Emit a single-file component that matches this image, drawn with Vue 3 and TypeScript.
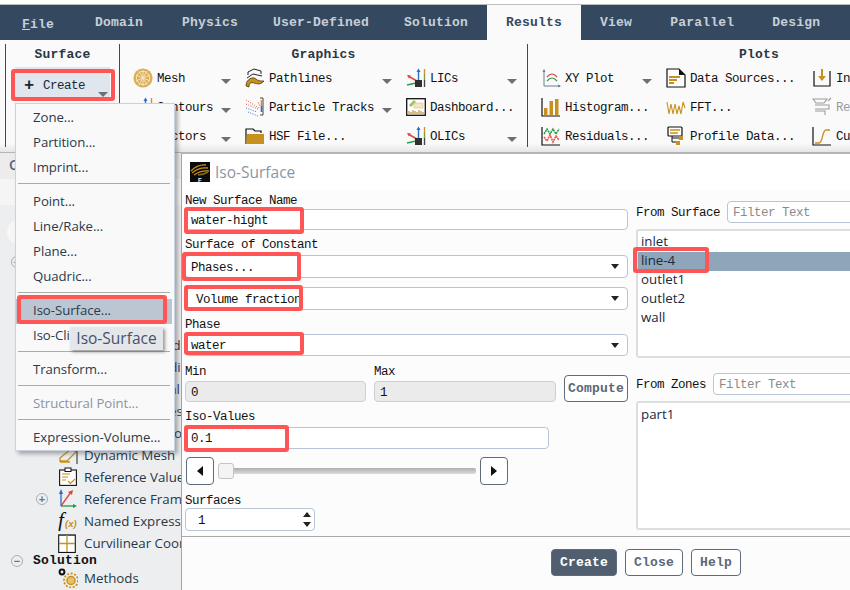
<template>
  <div class="app">
    <div class="tabs">
      <div v-for="t in tabs" :key="t.name" class="tab" :class="t.cls">
        <template v-if="t.name === 'File'"><u>F</u>ile</template>
        <template v-else>{{ t.name }}</template>
      </div>
    </div>

    <div class="ribbon">
      <section class="group group--surface">
        <h4 class="group-title">Surface</h4>
        <div class="create-btn">
          <span class="create-plus">+</span>
          <span>Create</span>
          <i class="arrow create-arrow"></i>
        </div>
      </section>

      <section class="group group--graphics">
        <h4 class="group-title">Graphics</h4>
        <div class="cmd-grid cmd-grid--graphics">
          <div v-for="c in graphics" :key="c.label" class="cmd">
            <svg class="cmd-icon" viewBox="0 0 20 20" v-html="icons[c.icon]"></svg>
            <span class="cmd-label">{{ c.label }}</span>
            <i v-if="c.drop" class="arrow"></i>
          </div>
        </div>
      </section>

      <section class="group group--plots">
        <h4 class="group-title">Plots</h4>
        <div class="cmd-grid cmd-grid--plots">
          <div v-for="c in plots" :key="c.label" class="cmd" :class="{ 'cmd--off': c.off }">
            <svg class="cmd-icon" viewBox="0 0 20 20" v-html="icons[c.icon]"></svg>
            <span class="cmd-label">{{ c.label }}</span>
            <i v-if="c.drop" class="arrow"></i>
          </div>
        </div>
      </section>
    </div>

    <div class="outline">
      <div class="outline-tab">Outline View</div>
      <div class="outline-filter"></div>
      <div class="tree">
        <div class="search-pill"></div>
        <div class="tree-head"><span class="expander">−</span><b>Setup</b></div>
        <div v-for="r in tree" :key="r.label" class="tree-row">
          <span class="tree-slot"><span v-if="r.plus" class="expander">+</span></span>
          <svg class="tree-icon" viewBox="0 0 20 20" v-html="icons[r.icon]"></svg>
          <span>{{ r.label }}</span>
        </div>
        <div class="tree-head"><span class="expander">−</span><b>Solution</b></div>
        <div class="tree-row">
          <span class="tree-slot"></span>
          <svg class="tree-icon" viewBox="0 0 20 20" v-html="icons.methods"></svg>
          <span>Methods</span>
        </div>
      </div>
    </div>

    <!-- Create dropdown -->
    <div class="menu">
      <template v-for="(m, i) in menu" :key="i">
        <div v-if="m === '-'" class="menu-sep"></div>
        <div v-else class="menu-item" :class="{ 'menu-item--on': m === 'Iso-Surface...', 'menu-item--off': m === 'Structural Point...' }">{{ m }}</div>
      </template>
    </div>
    <div class="tooltip">Iso-Surface</div>

    <!-- Iso-Surface dialog -->
    <div class="dialog">
      <div class="dialog-title">
        <svg class="dialog-icon" viewBox="0 0 20 20">
          <rect width="20" height="20" fill="#0b0b0b" />
          <path d="M1 9 Q8 2 16 3 M2 11 Q9 5 18 6 M4 13 Q11 8 19 9" fill="none" stroke="#c8911d" stroke-width="1.3" />
          <path d="M8 13 Q13 13 18 10" fill="none" stroke="#8a6414" stroke-width="1.6" />
          <text x="8" y="19.5" font-size="6" font-weight="700" fill="#fff" font-family="Liberation Sans">F</text>
        </svg>
        <span>Iso-Surface</span>
      </div>

      <div class="dialog-body">
        <div class="col-left">
          <label class="lab lab--first">New Surface Name</label>
          <div class="field field--name">water-hight</div>

          <label class="lab lab--constant">Surface of Constant</label>
          <div class="field select select--a">Phases...<i class="caret"></i></div>
          <div class="field select select--b">Volume fraction<i class="caret"></i></div>

          <label class="lab lab--phase">Phase</label>
          <div class="field select select--c">water<i class="caret"></i></div>

          <div class="minmax">
            <div class="minmax-cell">
              <label class="lab lab--minmax">Min</label>
              <div class="field field--off">0</div>
            </div>
            <div class="minmax-cell">
              <label class="lab lab--minmax">Max</label>
              <div class="field field--off">1</div>
            </div>
            <button class="btn btn--compute">Compute</button>
          </div>

          <label class="lab lab--iso">Iso-Values</label>
          <div class="field field--iso">0.1</div>

          <div class="slider-row">
            <div class="step-btn"><i class="tri tri--left"></i></div>
            <div class="slider">
              <div class="slider-knob"></div>
              <div class="slider-track"></div>
            </div>
            <div class="step-btn"><i class="tri tri--right"></i></div>
          </div>

          <label class="lab lab--surfaces">Surfaces</label>
          <div class="field field--spin">
            1
            <span class="spin"><i class="tri tri--up"></i><i class="tri tri--down"></i></span>
          </div>
        </div>

        <div class="col-right">
          <div class="filter-row filter-row--surface">
            <label class="lab">From Surface</label>
            <div class="field field--filter">Filter Text</div>
          </div>
          <div class="listbox">
            <div v-for="s in surfaces" :key="s" class="list-item" :class="{ 'list-item--on': s === 'line-4' }">{{ s }}</div>
          </div>
          <div class="filter-row filter-row--zones">
            <label class="lab">From Zones</label>
            <div class="field field--filter">Filter Text</div>
          </div>
          <div class="listbox">
            <div class="list-item list-item--zone">part1</div>
          </div>
        </div>
      </div>

      <div class="dialog-foot">
        <button class="btn btn--primary">Create</button>
        <button class="btn">Close</button>
        <button class="btn">Help</button>
      </div>
    </div>

    <!-- Red annotation boxes drawn over the screenshot -->
    <div v-for="m in marks" :key="m" class="mark" :class="`mark--${m}`"></div>
  </div>
</template>

<script setup lang="ts">
interface Cmd {
  label: string;
  icon: string;
  drop?: boolean;
  off?: boolean;
}

const tabs = [
  { name: 'File', cls: 'tab--file' },
  { name: 'Domain', cls: 'tab--domain' },
  { name: 'Physics', cls: '' },
  { name: 'User-Defined', cls: 'tab--tight' },
  { name: 'Solution', cls: 'tab--tight' },
  { name: 'Results', cls: 'tab--active' },
  { name: 'View', cls: '' },
  { name: 'Parallel', cls: '' },
  { name: 'Design', cls: '' },
];

const graphics: Cmd[] = [
  { label: 'Mesh', icon: 'mesh', drop: true },
  { label: 'Pathlines', icon: 'pathlines', drop: true },
  { label: 'LICs', icon: 'lic', drop: true },
  { label: 'Contours', icon: 'lic', drop: true },
  { label: 'Particle Tracks', icon: 'particles', drop: true },
  { label: 'Dashboard...', icon: 'dashboard' },
  { label: 'Vectors', icon: 'lic', drop: true },
  { label: 'HSF File...', icon: 'folder' },
  { label: 'OLICs', icon: 'lic', drop: true },
];

const plots: Cmd[] = [
  { label: 'XY Plot', icon: 'xy', drop: true },
  { label: 'Data Sources...', icon: 'doc' },
  { label: 'Interpolated Data...', icon: 'interp' },
  { label: 'Histogram...', icon: 'histogram' },
  { label: 'FFT...', icon: 'fft' },
  { label: 'Reporting...', icon: 'report', off: true },
  { label: 'Residuals...', icon: 'residuals' },
  { label: 'Profile Data...', icon: 'profile' },
  { label: 'Curves...', icon: 'curve' },
];

const tree = [
  { label: 'General', icon: 'refvalues' },
  { label: 'Models', icon: 'refvalues' },
  { label: 'Materials', icon: 'refvalues' },
  { label: 'Boundary Conditions', icon: 'refvalues' },
  { label: 'Cell Zone Conditions', icon: 'refvalues' },
  { label: 'Non-Conformal Grid', icon: 'refvalues' },
  { label: 'Mesh Interfaces', icon: 'refvalues' },
  { label: 'Mixing Plane Zone', icon: 'refvalues' },
  { label: 'Dynamic Mesh', icon: 'dynmesh' },
  { label: 'Reference Values', icon: 'refvalues' },
  { label: 'Reference Frames', icon: 'frames', plus: true },
  { label: 'Named Expressions', icon: 'fx' },
  { label: 'Curvilinear Coordinates', icon: 'curvi' },
];

const menu = [
  'Zone...', 'Partition...', 'Imprint...', '-',
  'Point...', 'Line/Rake...', 'Plane...', 'Quadric...', '-',
  'Iso-Surface...', 'Iso-Clip...', '-',
  'Transform...', '-',
  'Structural Point...', '-',
  'Expression-Volume...',
];

const surfaces = ['inlet', 'line-4', 'outlet1', 'outlet2', 'wall'];
const marks = ['create', 'iso', 'name', 'phases', 'volume', 'water', 'value', 'line'];

const gold = '#c8911d';
const icons: Record<string, string> = {
  mesh: `<circle cx="10" cy="10" r="9.6" fill="#dcae55"/><g fill="none" stroke="#f7e8c6" stroke-width=".9"><circle cx="10" cy="10" r="6.6"/><path d="M3 7 10 10 17 7M3 13 10 10 17 13M10 2V18M6 3 14 17M14 3 6 17"/></g>`,
  pathlines: `<g fill="none" stroke="#222" stroke-width="1"><path d="M3 7V4L9 1 16 3V6"/><path d="M2 10 8 6 17 8"/></g><path d="M1 18C1 11 8 8 11 11 13 13 16 13 19 13 16 17 12 16 9 15 6 14 4 15 4 19Z" fill="${gold}" stroke="#3a2a08" stroke-width=".7"/>`,
  lic: `<path d="M12.5 14V2" stroke="#2d6fc0" stroke-width="1.4"/><path d="M12.5 .5 10.5 4H14.5Z" fill="#2d6fc0"/><path d="M11 13 2 8" stroke="#e8453c" stroke-width="1.6"/><path d="M1 7 5 7.5 3 10.5Z" fill="#e8453c"/><path d="M10 15 1 17" stroke="#2aa14a" stroke-width="1.6"/><rect x="9" y="12" width="7" height="7" fill="#2f2f2f"/><path d="M18.5 1V6" stroke="#d8902a" stroke-width="1.4"/><path d="M18.5 6V12" stroke="#8a9a3a" stroke-width="1.4"/><path d="M18.5 12V19" stroke="#444" stroke-width="1.4"/>`,
  particles: `<g stroke-width="1" stroke-dasharray="1 1.4" fill="none"><path d="M1 3 14 11" stroke="#e2574c"/><path d="M1 7 13 12" stroke="#e2574c"/><path d="M1 11 12 15" stroke="#4a76c4"/><path d="M3 15 13 19" stroke="#4a76c4"/></g><path d="M13 5 15 9" stroke="#e2a0a0"/><path d="M15 1H18V18H15" fill="none" stroke="#444"/><path d="M16.5 3V9" stroke="#d8902a" stroke-width="1.6"/><path d="M16.5 9V15" stroke="#3a6ab4" stroke-width="1.6"/>`,
  dashboard: `<rect x=".7" y="1.7" width="18.6" height="16.6" fill="#fff" stroke="#111" stroke-width="1.3"/><path d="M3 8 8 3 10 5 5 10Z" fill="#9fc06a"/><rect x="8" y="6" width="9" height="5" fill="#f4e6c4" stroke="#d9bb7c" stroke-width=".6"/><path d="M3 17V14M5 17V15M7 17V13M9 17V14M11 17V15M13 17V13M15 17V14M17 17V15" stroke="${gold}" stroke-width="1.2"/>`,
  folder: `<path d="M1 18V3H8L10 5H16V7" fill="none" stroke="#111" stroke-width="1.2"/><path d="M1 18 2 8H19V18Z" fill="${gold}"/>`,
  xy: `<path d="M3 2V18H19" fill="none" stroke="#6a7f94" stroke-width="1"/><path d="M1.5 4 3 1 4.5 4ZM17 16.5 20 18 17 19.500Z" fill="#6a7f94"/><path d="M6 9Q11 3 16 9" fill="none" stroke="#d8443c" stroke-width="1.2"/><path d="M6 13Q11 7 16 13" fill="none" stroke="#2f9a4a" stroke-width="1.2"/>`,
  doc: `<path d="M1 1H13L19 7V19H1Z" fill="#fff" stroke="#111" stroke-width="1.2"/><path d="M13 1 19 7H13Z" fill="#111"/><path d="M3 9H14M3 12H11M3 15H8" stroke="${gold}" stroke-width="1.8"/>`,
  interp: `<path d="M2 3V18H18V3" fill="none" stroke="#111" stroke-width="1.2"/><path d="M10 1V9" stroke="${gold}" stroke-width="2"/><path d="M6 8H14L10 13Z" fill="${gold}"/>`,
  histogram: `<path d="M1 1V19H19" fill="none" stroke="#111" stroke-width="1.2"/><rect x="3" y="11" width="3.500" height="7" fill="${gold}"/><rect x="8.500" y="4" width="3.500" height="14" fill="${gold}"/><rect x="14" y="2" width="3.500" height="16" fill="${gold}"/>`,
  fft: `<path d="M1 5 3 17 5 7 7 17 9 7 11 17 13 9 15 17 17 5 19 11" fill="none" stroke="${gold}" stroke-width="1.1"/>`,
  report: `<g fill="none" stroke="#9a9a9a" stroke-width="1.1"><path d="M1 2H15L12 6H4ZM3 8H17V12H3M3 14H13V18"/><path d="M16 4 19 1"/></g>`,
  residuals: `<path d="M1 1V19H19" fill="none" stroke="#111" stroke-width="1.2"/><path d="M3 8 6 3 9 8 12 3 15 8 18 3" fill="none" stroke="#2a9c4a" stroke-width="1.6" stroke-dasharray="2 .6"/><path d="M3 11 6 15 9 9 12 16 15 10 18 14" fill="none" stroke="#e85a50" stroke-width="1.6" stroke-dasharray="2 .6"/>`,
  profile: `<rect x="2" y="1" width="14" height="9" fill="#fff" stroke="#111" stroke-width="1.2" rx="1"/><path d="M4 4H14M4 7H12" stroke="${gold}" stroke-width="1.6"/><path d="M6 10V16H12M6 12H13" fill="none" stroke="#111"/><rect x="13" y="10" width="4" height="4" fill="${gold}"/><rect x="10" y="15" width="4" height="4" fill="${gold}"/>`,
  curve: `<path d="M1 1V19H19" fill="none" stroke="#111" stroke-width="1.2"/><path d="M3 17H7C11 17 10 4 14 4H18" fill="none" stroke="${gold}" stroke-width="1.3"/>`,
  dynmesh: `<path d="M2 13 13 4 18 7 9 16H2ZM2 17H12" fill="none" stroke="${gold}" stroke-width="1.300"/><path d="M19 2V19" stroke="#222"/>`,
  refvalues: `<rect x="1.600" y="3" width="16.800" height="15.400" fill="#fff" stroke="#111" stroke-width="1.100"/><rect x="7" y="1" width="6" height="3.500" fill="#fff" stroke="#111"/><path d="M4 7H12M4 10H10M4 13H8" stroke="${gold}" stroke-width="1.200"/><path d="M10 14 12.500 16.500 17 12" fill="none" stroke="${gold}" stroke-width="1.200"/>`,
  frames: `<path d="M3 2V17" stroke="#2a6ec4" stroke-width="1.300"/><path d="M1 5 3 0 5 5Z" fill="#2a6ec4"/><path d="M3 17 13 3" stroke="#e2443c" stroke-width="1.300"/><path d="M10 3 15 1 14 6Z" fill="#e2443c"/><path d="M3 17H16" stroke="#1f9a45" stroke-width="1.300"/><path d="M15 15 19 17 15 19Z" fill="#1f9a45"/>`,
  fx: `<text x="0" y="16" font-size="21" font-style="italic" font-family="Liberation Serif" fill="#111">f</text><text x="7" y="16" font-size="9.500" font-style="italic" font-family="Liberation Sans" font-weight="700" fill="${gold}">(x)</text>`,
  curvi: `<rect x=".7" y="1.700" width="16.600" height="14.600" transform="scale(1 1.200)" fill="#fff" stroke="#111" stroke-width="1.100"/><path d="M9 2V19M1 10.500H17" stroke="${gold}" stroke-width="1.300"/>`,
  methods: `<circle cx="4" cy="4" r="2.400" fill="none" stroke="#111" stroke-width="2"/><circle cx="13" cy="12.500" r="4" fill="#e8c06a" stroke="${gold}" stroke-width="1.500"/><circle cx="13" cy="12.500" r="7" fill="none" stroke="${gold}" stroke-width="1.800" stroke-dasharray="2 1.600"/>`,
};
</script>

<style scoped>
.app {
  position: relative;
  display: flex;
  flex-direction: column;
  width: 850px;
  height: 590px;
  overflow: hidden;
  background: #fff;
  border-top: 2px solid #fff;
  box-sizing: border-box;
  font-family: "Liberation Mono", "DejaVu Sans Mono", monospace;
  font-size: 12.5px;
  letter-spacing: -0.5px;
  color: #111;
}

.tabs {
  display: flex;
  flex: none;
  height: 35px;
  margin-top: 2px;
  border-top: 1px solid #bdbdbd;
  box-sizing: content-box;
  background: #34495f;
  color: #c8cfd8;
  font-size: 13px;
  font-weight: 700;
  letter-spacing: 0.2px;
  white-space: nowrap;
}

.tab {
  display: flex;
  align-items: center;
  padding: 0 19px;
}

.tab--file {
  padding: 3px 22px 0 22px;
}

.tab--domain {
  padding-right: 20px;
}

.tab--tight {
  padding-left: 16px;
}

.tab--active {
  background: #fafafa;
  color: #34495f;
}

.ribbon {
  display: flex;
  flex: none;
  height: 113px;
  padding: 4px 0 0 5px;
  box-sizing: border-box;
  background: linear-gradient(#fafafa 92%, #e6e6e6);
  border-bottom: 1px solid #b5b5b5;
}

.group {
  flex: none;
  height: 103px;
  box-sizing: border-box;
  border-right: 1px solid #3a4a5a;
}

.group--surface {
  width: 115px;
  border-left: 1px solid #3a4a5a;
}

.group--graphics {
  width: 408px;
  padding-left: 13px;
}

.group--plots {
  flex: none;
  width: 462px;
  padding-left: 13px;
  border-right: 0;
}

.group-title {
  height: 22px;
  margin: 0;
  font-size: 13px;
  line-height: 22px;
  letter-spacing: 0.2px;
  text-align: center;
  color: #2a3644;
}

.group--graphics .group-title {
  margin-left: -13px;
}

.group--plots .group-title {
  margin-left: -13px;
}

.create-btn {
  display: flex;
  align-items: center;
  width: 95px;
  height: 31px;
  margin: 1px 0 0 9px;
  padding: 6px 0 0 9px;
  box-sizing: border-box;
  background: #dfe6ee;
  color: #1b2733;
}

.create-plus {
  width: 19px;
  font-size: 17px;
  font-weight: 700;
}

.create-arrow {
  align-self: flex-end;
  margin: 0 2px 1px auto;
}

.arrow {
  flex: none;
  width: 0;
  height: 0;
  margin-top: 7px;
  margin-left: auto;
  border-left: 5px solid transparent;
  border-right: 5px solid transparent;
  border-top: 5px solid #6c7075;
}

.cmd-grid {
  display: grid;
  grid-auto-rows: 24px;
  column-gap: 4px;
  row-gap: 5px;
}

.cmd-grid--graphics {
  grid-template-columns: 108px 157px 121px;
}

.cmd-grid--plots {
  grid-template-columns: 121px 142px 200px;
}

.cmd {
  display: flex;
  align-items: center;
  gap: 4px;
  padding-right: 10px;
  white-space: nowrap;
}

.cmd-label {
  padding-top: 2px;
}

.cmd--off {
  color: #9a9a9a;
}

.cmd-icon {
  flex: none;
  width: 20px;
  height: 20px;
}

.outline {
  display: flex;
  flex-direction: column;
  flex: 1;
  width: 181px;
  min-height: 0;
  font-family: "Open Sans", "Noto Sans", sans-serif;
  font-size: 13.3px;
  letter-spacing: 0;
  color: #24384c;
}

.outline-tab {
  flex: none;
  height: 26px;
  padding-left: 9px;
  background: #ececec;
  font-weight: 600;
  font-size: 14px;
  line-height: 24px;
  color: #55657a;
}

.outline-filter {
  flex: none;
  height: 26px;
  background: #f5f5f5;
}

.tree {
  flex: 1;
  padding-top: 14px;
  background: #edeef0;
  white-space: nowrap;
}

.search-pill {
  width: 120px;
  height: 26px;
  margin-left: 7px;
  border-radius: 13px;
  background: #f6f6f7;
}

.tree-head {
  display: flex;
  align-items: center;
  gap: 10px;
  height: 13px;
  margin-top: 10px;
  padding-left: 11px;
  font-family: "Liberation Mono", monospace;
  font-size: 13px;
  letter-spacing: 0.2px;
  color: #111;
}

.tree-row + .tree-head {
  margin-top: 0;
}

.tree-row {
  display: flex;
  align-items: center;
  height: 22px;
  padding-left: 36px;
}

.tree-slot {
  flex: none;
  display: flex;
  width: 22px;
}

.tree-icon {
  flex: none;
  width: 20px;
  height: 20px;
  margin-right: 6px;
}

.expander {
  display: flex;
  align-items: center;
  justify-content: center;
  flex: none;
  width: 12px;
  height: 12px;
  border: 1.5px solid #a9b0b8;
  border-radius: 50%;
  box-sizing: border-box;
  font-family: "Liberation Sans", sans-serif;
  font-size: 11px;
  font-weight: 700;
  color: #6d7680;
}

.menu {
  position: absolute;
  left: 15px;
  top: 101px;
  width: 160px;
  height: 348px;
  padding-top: 1.5px;
  box-sizing: border-box;
  background: #f9f9f9;
  border: 1px solid #c8d2e0;
  box-shadow: 3px 3px 4px rgba(60, 60, 60, 0.4);
  font-family: "Open Sans", "Noto Sans", sans-serif;
  font-size: 13.2px;
  letter-spacing: -0.05px;
  color: #2b3a4a;
  z-index: 2;
}

.menu-item {
  height: 25px;
  margin-right: 2px;
  padding-left: 17px;
  line-height: 22px;
}

.menu-item--on {
  background: #bcc6d2;
}

.menu-item--off {
  color: #8b949e;
}

.menu-sep {
  height: 1px;
  margin: 2px 4px 6px 2px;
  background: #ababab;
}

.tooltip {
  position: absolute;
  left: 70px;
  top: 325px;
  width: 93px;
  height: 23px;
  background: #e4e6e9;
  box-shadow: 2px 2px 3px rgba(60, 60, 60, 0.5);
  font-family: "Open Sans", "Noto Sans", sans-serif;
  font-size: 15.500px;
  letter-spacing: 0;
  line-height: 22px;
  text-align: center;
  color: #43536a;
  z-index: 3;
}

.dialog {
  position: absolute;
  left: 181px;
  top: 151px;
  bottom: 0;
  display: flex;
  flex-direction: column;
  width: 760px;
  box-sizing: border-box;
  background: #fcfcfc;
  border-left: 1px solid #a5a5a5;
  border-top: 1px solid #b5b5b5;
  z-index: 1;
}

.dialog-title {
  display: flex;
  align-items: center;
  flex: none;
  gap: 5px;
  height: 36px;
  padding-left: 8px;
  background: #fff;
  font-family: "Open Sans", "Noto Sans", sans-serif;
  font-size: 15.500px;
  letter-spacing: 0;
  color: #8c96a3;
}

.dialog-icon {
  width: 20px;
  height: 20px;
}

.dialog-body {
  display: grid;
  flex: none;
  grid-template-columns: 443px 1fr;
  column-gap: 8px;
  height: 346px;
  padding-left: 3px;
  border-bottom: 1px solid #a8a8a8;
  box-sizing: content-box;
}

.col-left,
.col-right {
  display: flex;
  flex-direction: column;
  min-width: 0;
}

.lab {
  display: block;
  height: 14px;
  line-height: 16px;
  white-space: nowrap;
}

.lab--first { margin-top: 3px; }
.lab--constant { margin-top: 7px; }
.lab--phase { margin-top: 7px; }
.lab--minmax { margin-bottom: 3px; }
.lab--iso { margin-top: 7px; }
.lab--surfaces { margin-top: 8px; }

.field {
  position: relative;
  flex: none;
  display: flex;
  align-items: center;
  box-sizing: border-box;
  padding: 2px 0 0 5px;
  background: #fff;
  border: 1px solid #b9c5d6;
  border-radius: 4px;
  white-space: pre;
}

.field--name {
  height: 21px;
  margin-top: 2px;
}

.select--a {
  height: 23px;
  margin-top: 4px;
}

.select--b {
  height: 23px;
  margin-top: 9px;
  padding-left: 10px;
}

.select--c {
  height: 22px;
  margin-top: 3px;
}

.caret {
  margin: -2px 8px 0 auto;
  width: 0;
  height: 0;
  border-left: 4px solid transparent;
  border-right: 4px solid transparent;
  border-top: 5px solid #222;
}

.minmax {
  display: grid;
  grid-template-columns: 181px 182px 64px;
  column-gap: 8px;
  align-items: end;
  margin-top: 8px;
}

.field--off {
  height: 21px;
  background: #ebebeb;
  border-color: #cfcfcf;
}

.btn {
  height: 27px;
  margin: 0;
  padding: 0 8px;
  background: #fff;
  border: 1px solid #5d6b7b;
  border-radius: 4px;
  font-family: "Liberation Mono", monospace;
  font-size: 13px;
  font-weight: 700;
  letter-spacing: 0.2px;
  color: #5b6877;
}

.btn--compute {
  padding: 0;
}

.btn--primary {
  background: #505e6f;
  color: #fff;
}

.field--iso {
  width: 364px;
  height: 22px;
  margin-top: 4px;
}

.slider-row {
  display: flex;
  align-items: center;
  gap: 4px;
  height: 28px;
  margin: 8px 0 0 1px;
}

.step-btn {
  display: flex;
  align-items: center;
  justify-content: center;
  width: 28px;
  height: 28px;
  box-sizing: border-box;
  background: #fff;
  border: 1px solid #5d6b7b;
  border-radius: 4px;
}

.slider {
  display: flex;
  align-items: center;
  width: 258px;
}

.slider-knob {
  flex: none;
  width: 16px;
  height: 16px;
  box-sizing: border-box;
  background: #f4f4f4;
  border: 1px solid #c4c4c4;
  border-radius: 3px;
}

.slider-track {
  flex: 1;
  height: 6px;
  background: linear-gradient(#aeaeae, #dcdcdc);
  border-radius: 0 2px 2px 0;
}

.tri {
  display: block;
  width: 0;
  height: 0;
}

.tri--left {
  border-top: 5px solid transparent;
  border-bottom: 5px solid transparent;
  border-right: 6px solid #111;
}

.tri--right {
  border-top: 5px solid transparent;
  border-bottom: 5px solid transparent;
  border-left: 6px solid #111;
}

.tri--up {
  border-left: 4px solid transparent;
  border-right: 4px solid transparent;
  border-bottom: 5px solid #222;
}

.tri--down {
  border-left: 4px solid transparent;
  border-right: 4px solid transparent;
  border-top: 5px solid #222;
}

.field--spin {
  width: 130px;
  height: 23px;
  margin-top: 1px;
}

.spin {
  display: flex;
  flex-direction: column;
  gap: 5px;
  margin: -2px 3px 0 auto;
}

.filter-row {
  display: flex;
  align-items: center;
  gap: 7px;
  height: 22px;
}

.filter-row--surface {
  margin-top: 11px;
}

.filter-row--zones {
  margin-top: 15px;
}

.field--filter {
  flex: 1;
  height: 22px;
  color: #8a8a8a;
  border-radius: 4px 0 0 4px;
}

.listbox {
  flex: none;
  height: 129px;
  margin-top: 6px;
  padding-top: 2px;
  box-sizing: border-box;
  background: #fff;
  border: 2px solid #dedede;
  border-radius: 3px;
  font-family: "Open Sans", "Noto Sans", sans-serif;
  font-size: 13.3px;
  letter-spacing: 0;
  color: #1a2a40;
}

.list-item {
  height: 19px;
  padding-left: 3px;
  line-height: 17px;
}

.list-item--on {
  background: #8fa5ba;
}

.list-item--zone {
  margin-top: 1px;
}

.dialog-foot {
  display: flex;
  flex: none;
  gap: 8px;
  padding: 12px 0 0 369px;
}

.mark {
  position: absolute;
  box-sizing: border-box;
  border: 4px solid #ff5555;
  border-radius: 3px;
  z-index: 4;
}

/* .app has a 2px white top border, so tops here are page y minus 2 */
.mark--create { left: 11px; top: 67px; width: 104px; height: 32px; }
.mark--iso { left: 17px; top: 293px; width: 150px; height: 29px; }
.mark--name { left: 184px; top: 205px; width: 120px; height: 27px; }
.mark--phases { left: 182px; top: 250px; width: 119px; height: 29px; }
.mark--volume { left: 184px; top: 283px; width: 119px; height: 26px; }
.mark--water { left: 184px; top: 330px; width: 120px; height: 23px; }
.mark--value { left: 184px; top: 423px; width: 105px; height: 27px; }
.mark--line { left: 633px; top: 245px; width: 76px; height: 26px; }
</style>
